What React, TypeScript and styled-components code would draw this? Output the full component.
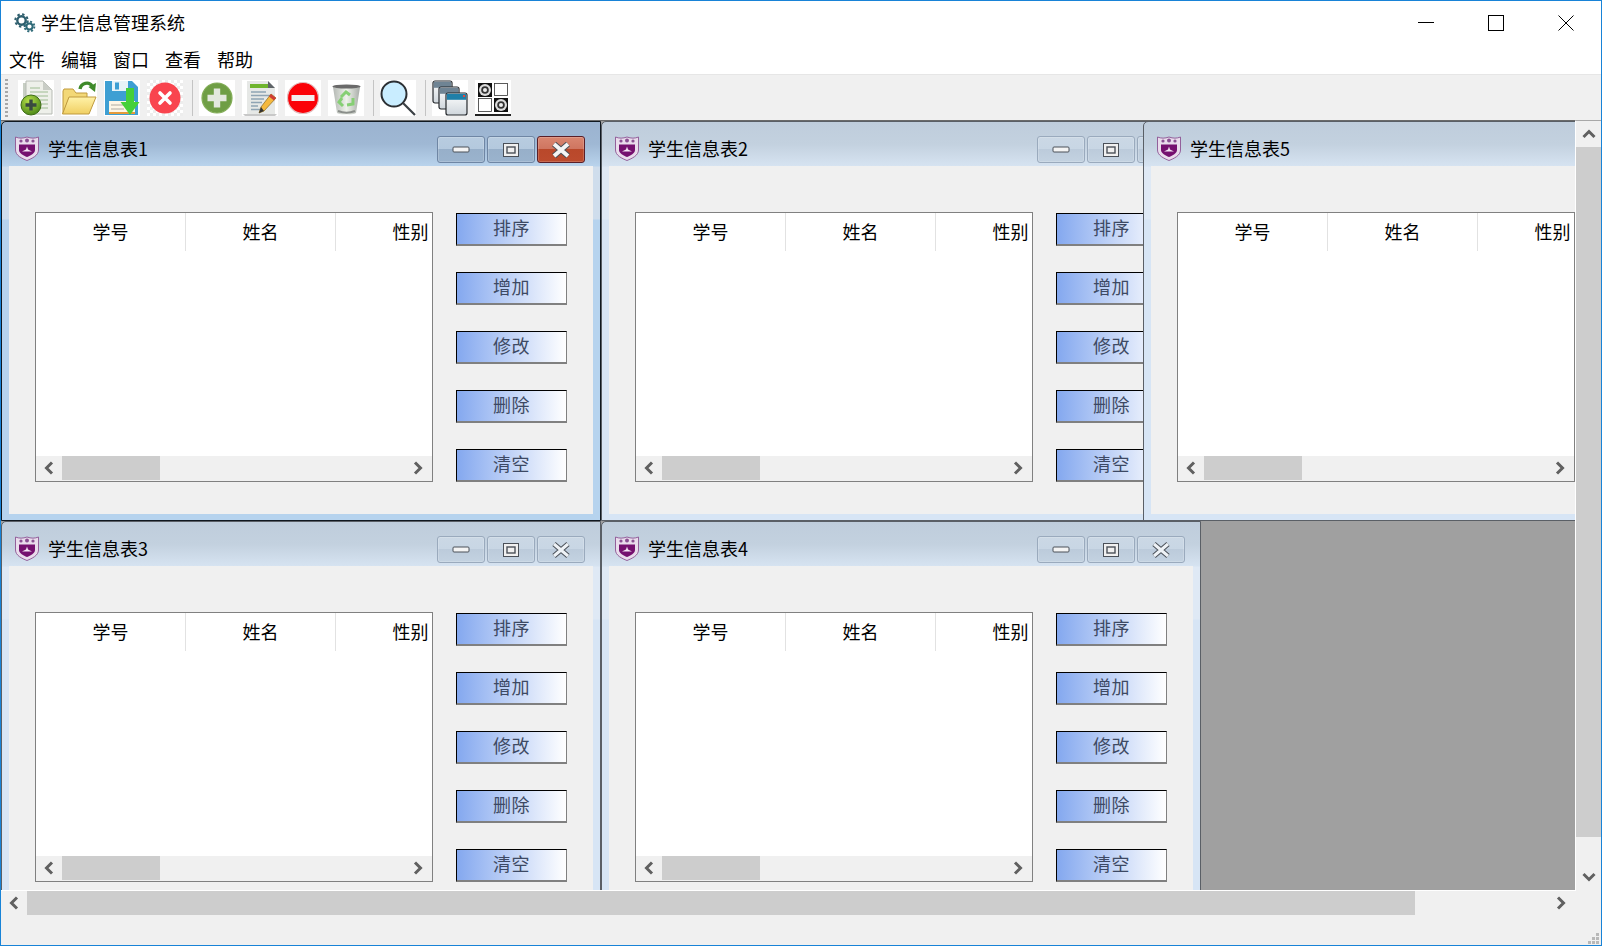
import React from "react";
import styled, { createGlobalStyle } from "styled-components";

const Global = createGlobalStyle`
  html, body { margin: 0; padding: 0; background: #fff; overflow: hidden; }
  * { box-sizing: border-box; }
`;

const FONT = `"Noto Sans CJK SC", "Liberation Sans", sans-serif`;

const Frame = styled.div`
  width: 1602px; height: 946px;
  border: 1px solid #1883d7;
  display: flex; flex-direction: column;
  font-family: ${FONT};
  color: #000;
  background: #f0f0f0;
`;
const TitleBar = styled.div`
  height: 43px; background: #fff; display: flex; align-items: center;
  padding: 0 0 0 13px; flex: none;
`;
const AppTitle = styled.div`
  font-size: 18px; line-height: 24px; margin: 0 0 2px 5px; flex: 1;
`;
const WinCtrl = styled.div`
  width: 70px; height: 43px; display: flex; align-items: center; justify-content: center;
`;
const WinCtrls = styled.div`
  display: flex; margin-right: 0;
`;
const MenuBar = styled.div`
  height: 30px; background: #fff; display: flex; align-items: center; padding: 0 0 0 8px; gap: 16px; flex: none;
`;
const MenuItem = styled.div`
  font-size: 18px; line-height: 24px; width: 36px; white-space: nowrap;
`;
const ToolBar = styled.div`
  height: 46px; flex: none; border-top: 1px solid #e6e6e6; background: #f0f0f0;
  display: flex; align-items: flex-start; padding: 5px 0 0 4px;
`;
const Grip = styled.div`
  width: 3px; height: 38px; margin-right: 10px; margin-top: -1px;
  background: repeating-linear-gradient(to bottom, #a8a8a8 0 2px, transparent 2px 4px);
`;
const ToolGroup = styled.div`
  display: flex; gap: 7px;
`;
const ToolIcon = styled.div`
  width: 36px; height: 36px; background: #fff; flex: none; display: flex;
`;
const ToolSep = styled.div`
  width: 1px; height: 36px; background: #c4c4c4; margin: 0 6.5px 0 8.5px;
`;
const Middle = styled.div`
  flex: 1; display: flex; min-height: 0;
`;
const MdiArea = styled.div`
  width: 1575px; position: relative; overflow: hidden; background: #a0a0a0;
  border-top: 1px solid #6a6a6a; border-right: 1px solid #fff; border-bottom: 1px solid #fff;
`;
const VScroll = styled.div`
  flex: 1; display: flex; flex-direction: column; background: #f0f0f0; border-top: 1px solid #a8a8a8;
`;
const VSlot = styled.div`
  height: ${p => p.$h}px; display: flex; align-items: center; justify-content: center; flex: none;
`;
const VThumb = styled.div`
  height: 690px; background: #cdcdcd; flex: none;
`;
const VRest = styled.div`flex: 1;`;
const HScroll = styled.div`
  height: 24px; flex: none; display: flex; background: #f0f0f0;
`;
const HSlot = styled.div`
  width: ${p => p.$w}px; display: flex; align-items: center; justify-content: center; flex: none;
`;
const HThumb = styled.div`
  width: ${p => p.$w}px; background: #cdcdcd; flex: none;
`;
const HRest = styled.div`flex: 1;`;
const Footer = styled.div`
  height: 30px; flex: none; display: flex; justify-content: flex-end; align-items: flex-end; padding: 0 2px 1px 0;
`;

const SubWindow = styled.div`
  position: absolute; left: ${p => p.$x}px; top: ${p => p.$y}px;
  width: 600px; height: 400px;
  border: 1px solid ${p => (p.$active ? "#101820" : "#5a5f66")};
  border-top-left-radius: 5px;
  padding: 0 7px 6px 7px;
  display: flex; flex-direction: column;
  background: ${p =>
    p.$active
      ? "linear-gradient(to bottom, #9bb3d0 0, #9fb8d4 22px, #b9d3ec 44px, #cfddec 45px, #cfddec 97px, #b6d3ee 98px)"
      : "linear-gradient(to bottom, #bfcddc 0, #c3d1df 22px, #d6e3f1 44px, #dfe9f5 45px, #dfe9f5 97px, #d7e5f5 98px)"};
`;
const SubTitle = styled.div`
  height: 44px; flex: none; display: flex; align-items: center; padding: 0 0 0 6px;
`;
const ShieldSlot = styled.div`
  width: 24px; height: 25px; flex: none; margin-top: 9px; display: flex;
`;
const SubName = styled.div`
  font-size: 18px; line-height: 24px; margin-left: 9px; flex: 1; padding-top: 8px;
`;
const SubBtns = styled.div`
  display: flex; gap: 2px; margin-right: 8px; margin-top: 11px;
`;
const SubBtn = styled.div`
  width: 48px; height: 27px; border-radius: 3px; display: flex; align-items: center; justify-content: center;
  border: 1px solid ${p => (p.$close ? "#5a1f28" : p.$active ? "#6f86a4" : "#9aaabd")};
  background: ${p =>
    p.$close
      ? "linear-gradient(to bottom, #d98670 0, #cf7560 47%, #b9482a 48%, #bc4b2e 100%)"
      : p.$active
      ? "linear-gradient(to bottom, #b8cce0 0, #b4c9de 47%, #97afc9 48%, #9ab3cd 100%)"
      : "linear-gradient(to bottom, #cbd8e5 0, #c8d6e4 47%, #bccbdb 48%, #c3d2e1 100%)"};
  box-shadow: inset 0 0 0 1px rgba(255,255,255,0.18);
`;
const Client = styled.div`
  flex: 1; background: #f0f0f0; padding: 46px 26px 0 26px; display: flex; gap: 23px; align-items: flex-start;
`;
const TableBox = styled.div`
  width: 398px; height: 270px; border: 1px solid #808080; background: #fff;
  display: flex; flex-direction: column; overflow: hidden; flex: none;
`;
const HeaderRow = styled.div`
  height: 38px; display: flex; flex: none;
`;
const HeaderCell = styled.div`
  width: ${p => p.$w}px; flex: none; font-size: 18px; line-height: 36px; text-align: center;
  border-right: 1px solid #e2e2e2; white-space: nowrap;
`;
const TableBody = styled.div`flex: 1; background: #fff;`;
const TableScroll = styled.div`
  height: 25px; flex: none; display: flex; background: #f0f0f0; padding-bottom: 1px;
`;
const ActionCol = styled.div`
  display: flex; flex-direction: column; gap: 26px; flex: none; padding-top: 1px;
`;
const ActionBtn = styled.div`
  width: 111px; height: 33px; flex: none;
  border-style: solid; border-width: 1px 1px 2px 1px; border-color: #000 #808080 #808080 #000;
  background: linear-gradient(to right, #84a8ef 0%, #ffffff 100%);
  color: #3d4963; font-size: 18px; line-height: 27px; text-align: center; letter-spacing: 0.5px;
`;

const Arrow = ({ dir }: { dir: "l" | "r" | "u" | "d" }) => {
  const r = { l: 0, r: 180, u: 90, d: 270 }[dir];
  return (
    <svg width="14" height="14" viewBox="0 0 14 14" style={{ transform: `rotate(${r}deg)` }}>
      <polyline points="10,1.5 4.5,7 10,12.5" fill="none" stroke="#606060" strokeWidth="3" />
    </svg>
  );
};

const Gear = () => (
  <svg width="22" height="20" viewBox="0 0 22 20">
    <circle cx="7.5" cy="7.5" r="4.2" fill="none" stroke="#2f5f6e" strokeWidth="2.4" />
    <circle cx="7.5" cy="7.5" r="6.2" fill="none" stroke="#2f5f6e" strokeWidth="2" strokeDasharray="2.4 2.45" />
    <circle cx="15.5" cy="13.5" r="3.1" fill="none" stroke="#2f6a78" strokeWidth="2" />
    <circle cx="15.5" cy="13.5" r="4.9" fill="none" stroke="#2f6a78" strokeWidth="1.8" strokeDasharray="2 1.85" />
  </svg>
);

const Shield = () => (
  <svg width="24" height="25" viewBox="0 0 24 25">
    <path d="M0.5 1 C4 2.5 8 2.5 12 1 C16 2.5 20 2.5 23.5 1 V14 C23.5 19.5 17 22.5 12 24.5 C7 22.5 0.5 19.5 0.5 14 Z" fill="#e9dcec" stroke="#93609b" strokeWidth="1" />
    <circle cx="6" cy="5" r="1.6" fill="#8a4f92" />
    <circle cx="12" cy="4.5" r="2" fill="#8a4f92" />
    <circle cx="18" cy="5" r="1.6" fill="#8a4f92" />
    <path d="M4 8.5 H20 V14 C20 17.5 15.5 19.5 12 21 C8.5 19.5 4 17.5 4 14 Z" fill="#75106f" />
    <path d="M7 15.5 L11 13.5 L12 10.5 L13 13.5 L17 15.5 Z" fill="#f3e6f4" />
  </svg>
);

const MinGlyph = () => (
  <svg width="18" height="8" viewBox="0 0 18 8">
    <rect x="1" y="1" width="16" height="5" rx="1" fill="#f4f4f4" stroke="#4a5058" strokeWidth="1" />
  </svg>
);
const MaxGlyph = () => (
  <svg width="18" height="16" viewBox="0 0 18 16">
    <rect x="1.5" y="1.5" width="15" height="13" fill="#f0f0f0" stroke="#4a5058" strokeWidth="1" />
    <rect x="5" y="5" width="8" height="6" fill="none" stroke="#4a5058" strokeWidth="1.4" />
  </svg>
);
const CloseGlyph = ({ active }: { active: boolean }) => (
  <svg width="18" height="16" viewBox="0 0 18 16">
    <path d="M2 2 L16 14 M16 2 L2 14" stroke="#4a5058" strokeWidth={active ? 6 : 5} strokeLinecap="butt" />
    <path d="M2 2 L16 14 M16 2 L2 14" stroke={active ? "#f4f4f4" : "#eef2f6"} strokeWidth={active ? 4 : 3} strokeLinecap="butt" />
  </svg>
);

const S = 36;
const Svg = ({ children }: { children: React.ReactNode }) => (
  <svg width={S} height={S} viewBox="0 0 36 36">{children}</svg>
);

const IconNew = () => (
  <Svg>
    <defs>
      <radialGradient id="gNew" cx="0.4" cy="0.3" r="0.8">
        <stop offset="0" stopColor="#b7e04a" />
        <stop offset="1" stopColor="#3f7d12" />
      </radialGradient>
    </defs>
    <path d="M5 3 H18 V30 H5 Z" fill="#c8cfc4" />
    <path d="M8 1 H25 L34 10 V34 H8 Z" fill="#eef0ea" stroke="#b7bbb4" />
    <path d="M25 1 V10 H34 Z" fill="#c9cdc6" />
    <path d="M12 8 H22 M12 12 H30 M12 16 H30 M12 20 H30 M18 24 H30 M20 28 H30" stroke="#b9cdb0" strokeWidth="1.5" />
    <circle cx="13" cy="25" r="10" fill="url(#gNew)" stroke="#3e6d16" />
    <path d="M13 19.5 V30.5 M7.5 25 H18.5" stroke="#3a4a40" strokeWidth="3.4" />
  </Svg>
);
const IconOpen = () => (
  <Svg>
    <defs>
      <linearGradient id="gFold" x1="0" y1="0" x2="0" y2="1">
        <stop offset="0" stopColor="#fff2a8" />
        <stop offset="1" stopColor="#f0cf62" />
      </linearGradient>
    </defs>
    <path d="M2 11 L3 9 H12 L15 13 H26 V18 H8 L2 34 Z" fill="#f3d877" stroke="#c09a3c" />
    <path d="M8 17 H35 L28 34 H1.5 Z" fill="url(#gFold)" stroke="#bf9a3e" />
    <path d="M19 9 C20 3 28 1 31 6" fill="none" stroke="#3f8a2a" strokeWidth="3.4" />
    <path d="M27.5 7 L35 3 L34 12 Z" fill="#3f8a2a" />
  </Svg>
);
const IconSave = () => (
  <Svg>
    <path d="M1 1 H28 L34 7 V35 H1 Z" fill="#3e9fd3" />
    <rect x="8" y="1" width="16" height="10" fill="#e8f3f8" />
    <rect x="11" y="2.5" width="4" height="7" fill="#3e9fd3" />
    <rect x="5" y="21" width="26" height="12" fill="#fdf6e6" />
    <path d="M7 25 H22 M7 29 H20" stroke="#c9c4b8" strokeWidth="1.5" />
    <rect x="5" y="32" width="26" height="2" fill="#e59a3a" />
    <path d="M22 8 H30 V22 H35.5 L26 35 L16.5 22 H22 Z" fill="#46d03a" />
  </Svg>
);
const IconCancel = () => (
  <Svg>
    <defs>
      <pattern id="chk" width="6" height="6" patternUnits="userSpaceOnUse">
        <rect width="6" height="6" fill="#fff" />
        <rect width="3" height="3" fill="#ededed" />
        <rect x="3" y="3" width="3" height="3" fill="#ededed" />
      </pattern>
    </defs>
    <rect width="36" height="36" fill="url(#chk)" />
    <circle cx="18" cy="18" r="15.5" fill="#f9444e" />
    <path d="M13 13 L23 23 M23 13 L13 23" stroke="#fff" strokeWidth="3.6" strokeLinecap="round" />
  </Svg>
);
const IconAdd = () => (
  <Svg>
    <circle cx="18" cy="18" r="15" fill="#6f9e45" stroke="#83ad57" strokeWidth="1.2" />
    <path d="M18 8.5 V27.5 M8.5 18 H27.5" stroke="#e3e8de" strokeWidth="6.4" />
  </Svg>
);
const IconEdit = () => (
  <Svg>
    <path d="M1 34 H35 L33 36 H3 Z" fill="#c8c8c8" />
    <path d="M5 1 H26 L33 8 V34 H5 Z" fill="#e6e8e6" />
    <rect x="8" y="4" width="19" height="4" fill="#6fb52e" />
    <path d="M26 1 L33 8 H26 Z" fill="#5f6468" />
    <path d="M9 12 H24 M9 15.5 H28 M9 19 H22 M9 22.5 H20 M9 26 H16 M9 29.5 H18" stroke="#8fa4b4" strokeWidth="1.5" />
    <path d="M29 14 L34 18 L22 31 L17 33 L19 27 Z" fill="#f5b93e" stroke="#8a6a1e" strokeWidth="0.7" />
    <path d="M29 14 L34 18 L32 20.5 L27 16.5 Z" fill="#cf3d34" />
    <path d="M19 27 L22 31 L17 33 Z" fill="#333" />
  </Svg>
);
const IconStop = () => (
  <Svg>
    <circle cx="18" cy="18" r="15.5" fill="#fb0208" stroke="#e3bfc0" strokeWidth="1.2" />
    <rect x="6.5" y="15" width="23" height="6" fill="#f2eeee" />
  </Svg>
);
const IconBin = () => (
  <Svg>
    <defs>
      <linearGradient id="gBin" x1="0" y1="0" x2="1" y2="0">
        <stop offset="0" stopColor="#b4b8b4" />
        <stop offset="0.5" stopColor="#eef2ea" />
        <stop offset="1" stopColor="#a8aca8" />
      </linearGradient>
    </defs>
    <path d="M5 7 H32 L28 33 C24 35 13 35 9 33 Z" fill="url(#gBin)" />
    <ellipse cx="18.5" cy="6.5" rx="14" ry="2" fill="#6a6a6a" />
    <path d="M13 17 L18 12 L22 15 M25 18 L25 24 L19 25 M15 26 L11 22 L14 18" fill="none" stroke="#86cf74" strokeWidth="3" />
    <path d="M10 31 C15 33 22 33 27 31" fill="none" stroke="#8a8e8a" strokeWidth="2" />
  </Svg>
);
const IconSearch = () => (
  <Svg>
    <circle cx="14" cy="14" r="12.5" fill="#c9edff" stroke="#2b2f33" strokeWidth="2" />
    <path d="M23 23 L35 35" stroke="#3b4045" strokeWidth="2.2" />
  </Svg>
);
const Win = ({ x, y, w, h, bar, id }: { x: number; y: number; w: number; h: number; bar: string; id: string }) => (
  <g>
    <defs>
      <linearGradient id={id} x1="0" y1="0" x2="0" y2="1">
        <stop offset="0" stopColor="#ffffff" />
        <stop offset="1" stopColor="#cfd6dc" />
      </linearGradient>
    </defs>
    <rect x={x} y={y} width={w} height={h} rx="2" fill={`url(#${id})`} stroke="#23272b" strokeWidth="1.2" />
    <rect x={x + 0.8} y={y + 0.8} width={w - 1.6} height="6" fill={bar} />
  </g>
);
const IconCascade = () => (
  <Svg>
    <Win id="w1" x={1} y={1} w={19} h={22} bar="#6f8494" />
    <Win id="w2" x={7} y={7} w={20} h={22} bar="#6f8494" />
    <Win id="w3" x={14} y={13} w={21} h={22} bar="#1f7fa8" />
    <rect x="31" y="15" width="2" height="2" fill="#e6483a" />
  </Svg>
);
const Target = ({ x, y }: { x: number; y: number }) => (
  <g>
    <rect x={x} y={y} width="14" height="14" fill="#111" />
    <circle cx={x + 7} cy={y + 7} r="6" fill="#ddd" />
    <circle cx={x + 7} cy={y + 7} r="3.8" fill="#333" />
    <circle cx={x + 7} cy={y + 7} r="2" fill="#eee" />
  </g>
);
const IconGrid = () => (
  <Svg>
    <Target x={3} y={3} />
    <rect x="19.5" y="3.5" width="13" height="12" fill="#fff" stroke="#333" strokeWidth="0.8" />
    <rect x="3.5" y="18.5" width="13" height="13" fill="#fff" stroke="#333" strokeWidth="0.8" />
    <Target x={19} y={18} />
    <rect x="0" y="34" width="36" height="2" fill="#222" />
  </Svg>
);

const ACTIONS = ["排序", "增加", "修改", "删除", "清空"];
const COLS = ["学号", "姓名", "性别"];

const Sheet = ({ n, x, y, active, clipped }: { n: number; x: number; y: number; active?: boolean; clipped?: boolean }) => (
  <SubWindow $x={x} $y={y} $active={active}>
    <SubTitle>
      <ShieldSlot><Shield /></ShieldSlot>
      <SubName>学生信息表{n}</SubName>
      <SubBtns>
        <SubBtn $active={active}><MinGlyph /></SubBtn>
        <SubBtn $active={active}><MaxGlyph /></SubBtn>
        <SubBtn $active={active} $close={active}><CloseGlyph active={!!active} /></SubBtn>
      </SubBtns>
    </SubTitle>
    <Client>
      <TableBox>
        <HeaderRow>
          {COLS.map(c => <HeaderCell key={c} $w={150}>{c}</HeaderCell>)}
        </HeaderRow>
        <TableBody />
        <TableScroll>
          <HSlot $w={26}><Arrow dir="l" /></HSlot>
          <HThumb $w={98} />
          <HRest />
          <HSlot $w={28}><Arrow dir="r" /></HSlot>
        </TableScroll>
      </TableBox>
      {!clipped && (
        <ActionCol>
          {ACTIONS.map(a => <ActionBtn key={a}>{a}</ActionBtn>)}
        </ActionCol>
      )}
    </Client>
  </SubWindow>
);

export default function App() {
  return (
    <>
      <Global />
      <Frame>
        <TitleBar>
          <Gear />
          <AppTitle>学生信息管理系统</AppTitle>
          <WinCtrls>
            <WinCtrl>
              <svg width="16" height="16" viewBox="0 0 16 16"><path d="M0 7.5 H16" stroke="#000" strokeWidth="1" /></svg>
            </WinCtrl>
            <WinCtrl>
              <svg width="16" height="16" viewBox="0 0 16 16"><rect x="0.5" y="0.5" width="15" height="15" fill="none" stroke="#000" /></svg>
            </WinCtrl>
            <WinCtrl>
              <svg width="16" height="16" viewBox="0 0 16 16"><path d="M0.5 0.5 L15.5 15.5 M15.5 0.5 L0.5 15.5" stroke="#000" strokeWidth="1" /></svg>
            </WinCtrl>
          </WinCtrls>
        </TitleBar>
        <MenuBar>
          {["文件", "编辑", "窗口", "查看", "帮助"].map(m => <MenuItem key={m}>{m}</MenuItem>)}
        </MenuBar>
        <ToolBar>
          <Grip />
          <ToolGroup>
            <ToolIcon><IconNew /></ToolIcon>
            <ToolIcon><IconOpen /></ToolIcon>
            <ToolIcon><IconSave /></ToolIcon>
            <ToolIcon><IconCancel /></ToolIcon>
          </ToolGroup>
          <ToolSep />
          <ToolGroup>
            <ToolIcon><IconAdd /></ToolIcon>
            <ToolIcon><IconEdit /></ToolIcon>
            <ToolIcon><IconStop /></ToolIcon>
            <ToolIcon><IconBin /></ToolIcon>
          </ToolGroup>
          <ToolSep />
          <ToolIcon><IconSearch /></ToolIcon>
          <ToolSep />
          <ToolGroup>
            <ToolIcon><IconCascade /></ToolIcon>
            <ToolIcon><IconGrid /></ToolIcon>
          </ToolGroup>
        </ToolBar>
        <Middle>
          <MdiArea>
            <Sheet n={1} x={0} y={0} active />
            <Sheet n={2} x={600} y={0} />
            <Sheet n={3} x={0} y={400} />
            <Sheet n={4} x={600} y={400} />
            <Sheet n={5} x={1142} y={0} clipped />
          </MdiArea>
          <VScroll>
            <VSlot $h={26}><Arrow dir="u" /></VSlot>
            <VThumb />
            <VRest />
            <VSlot $h={28}><Arrow dir="d" /></VSlot>
          </VScroll>
        </Middle>
        <HScroll>
          <HSlot $w={26}><Arrow dir="l" /></HSlot>
          <HThumb $w={1388} />
          <HRest />
          <HSlot $w={80}><Arrow dir="r" /></HSlot>
        </HScroll>
        <Footer>
          <svg width="11" height="11" viewBox="0 0 11 11">
            {[[8, 0], [4, 4], [8, 4], [0, 8], [4, 8], [8, 8]].map(([x, y]) => (
              <rect key={`${x}-${y}`} x={x} y={y} width="3" height="3" fill="#b8b8b8" />
            ))}
          </svg>
        </Footer>
      </Frame>
    </>
  );
}
